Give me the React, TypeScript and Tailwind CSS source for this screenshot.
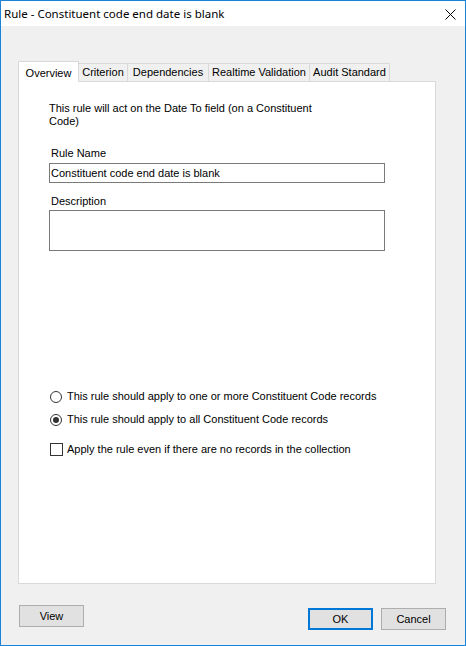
const ui = { fontFamily: '"Liberation Sans", Arial, sans-serif' };

function Tab({ label, width, active }: { label: string; width: string; active?: boolean }) {
  if (active) {
    return (
      <div
        className={`${width} h-[21px] -mb-px bg-white border border-b-0 border-[#d9d9d9] relative z-10 flex items-start justify-center pt-[3px] text-[11px] text-black`}
      >
        {label}
      </div>
    );
  }
  return (
    <div
      className={`${width} h-[18px] bg-[#f0f0f0] border-t border-r border-[#d9d9d9] flex items-center justify-center text-[11px] text-black`}
    >
      {label}
    </div>
  );
}

function Radio({ checked, label }: { checked?: boolean; label: string }) {
  return (
    <div className="flex items-center h-[13px]">
      <div className="w-[12px] h-[12px] ml-px rounded-full border border-[#333333] bg-white flex items-center justify-center">
        {checked && <div className="w-[6px] h-[6px] rounded-full bg-[#333333]" />}
      </div>
      <span className="ml-[5px] text-[11px] text-black leading-[13px]">{label}</span>
    </div>
  );
}

function Button({ label, primary, width }: { label: string; primary?: boolean; width: string }) {
  return (
    <div
      className={`${width} h-[22px] flex items-center justify-center text-[11px] text-black bg-[#e1e1e1] ${
        primary ? "border-2 border-[#0078d7]" : "border border-[#adadad]"
      }`}
    >
      {label}
    </div>
  );
}

export default function App() {
  return (
    <div className="w-[466px] h-[646px] border border-[#1883d7] bg-[#f0f0f0] flex flex-col" style={ui}>
      {/* Title bar */}
      <div className="h-[25px] bg-white flex items-center justify-between pl-[3px] pr-[9px]">
        <span className="text-[11.5px] text-black" style={{ fontFamily: '"Noto Sans", "Open Sans", sans-serif' }}>
          Rule - Constituent code end date is blank
        </span>
        <svg width="11" height="11" viewBox="0 0 11 11" className="mt-[2px]">
          <path d="M0.5 0.5L10.5 10.5M10.5 0.5L0.5 10.5" stroke="#000" strokeWidth="1" />
        </svg>
      </div>

      {/* Body */}
      <div className="flex-1 flex flex-col pl-[17px] pr-[19px] pt-[35px]">
        {/* Tabs */}
        <div className="flex items-end h-[20px]">
          <Tab label="Overview" width="w-[61px]" active />
          <Tab label="Criterion" width="w-[49px]" />
          <Tab label="Dependencies" width="w-[81px]" />
          <Tab label="Realtime Validation" width="w-[101px]" />
          <Tab label="Audit Standard" width="w-[80px]" />
        </div>

        {/* Panel */}
        <div className="w-[418px] h-[503px] bg-white border border-[#d9d9d9] flex flex-col pl-[30px] pt-[20px]">
          <p className="w-[276px] text-[11px] leading-[13px] text-black">
            This rule will act on the Date To field (on a Constituent Code)
          </p>

          <div className="mt-[19px] ml-[2px] text-[11px] leading-[13px] text-black">Rule Name</div>
          <div className="mt-[3px] w-[336px] h-[20px] border border-[#7a7a7a] flex items-center pl-[1px] text-[11px] text-black">
            Constituent code end date is blank
          </div>

          <div className="mt-[12px] ml-[2px] text-[11px] leading-[13px] text-black">Description</div>
          <div className="mt-[2px] w-[336px] h-[41px] border border-[#7a7a7a]" />

          <div className="mt-[139px] flex flex-col gap-[10px]">
            <Radio label="This rule should apply to one or more Constituent Code records" />
            <Radio checked label="This rule should apply to all Constituent Code records" />
          </div>

          <div className="mt-[17px] flex items-center h-[13px]">
            <div className="w-[13px] h-[13px] ml-px border border-[#333333] bg-white" />
            <span className="ml-[4px] text-[11px] leading-[13px] text-black">
              Apply the rule even if there are no records in the collection
            </span>
          </div>
        </div>

        {/* Bottom buttons */}
        <div className="mt-[21px] flex items-start justify-between pl-px">
          <Button label="View" width="w-[65px]" />
          <div className="flex gap-[8px] mt-[3px]">
            <Button label="OK" primary width="w-[65px]" />
            <Button label="Cancel" width="w-[65px]" />
          </div>
        </div>
      </div>
    </div>
  );
}
